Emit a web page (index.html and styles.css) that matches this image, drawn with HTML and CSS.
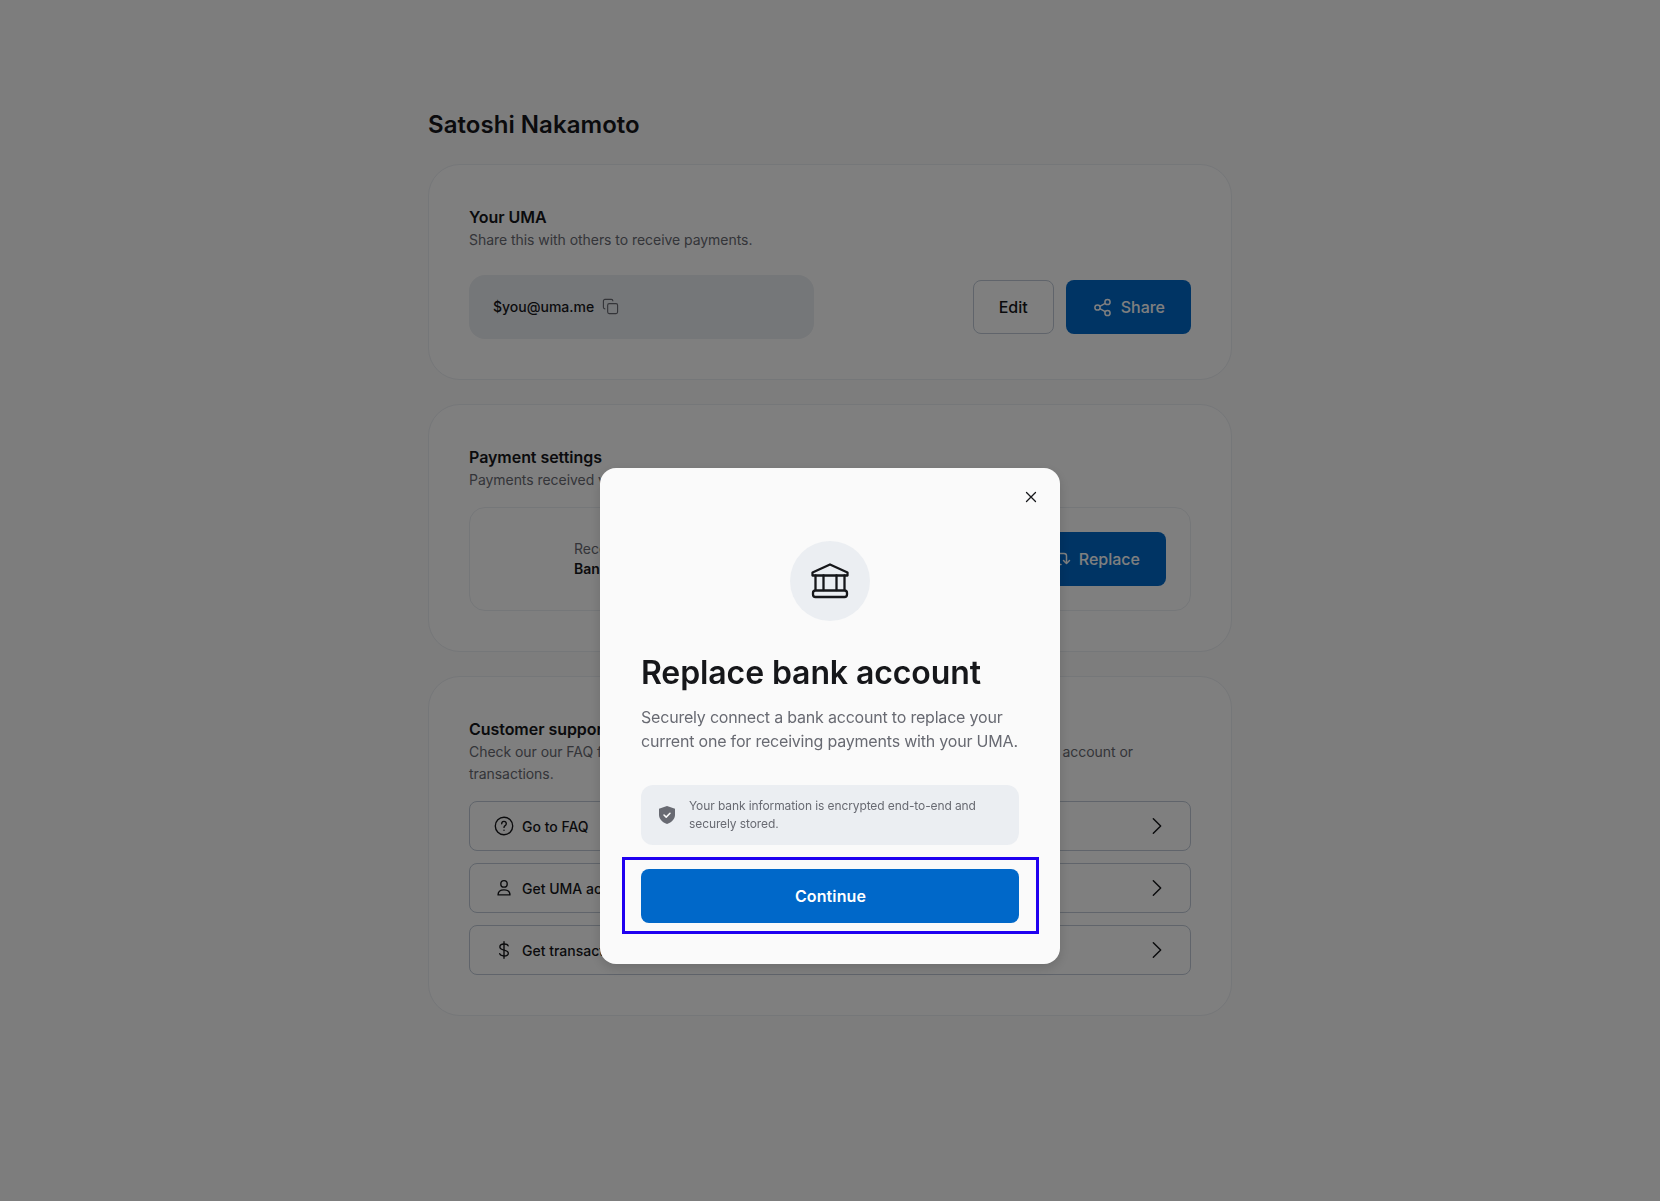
FILE: index.html
```html
<!DOCTYPE html>
<html>
  <head>
    <title>Settings</title>
    <link rel="stylesheet" href="styles.css">
  </head>
  <body>
    <main class="page">
      <h1 class="page-title">Satoshi Nakamoto</h1>

      <section class="card">
        <h2 class="card-title">Your UMA</h2>
        <p class="card-sub">Share this with others to receive payments.</p>
        <div class="uma-row">
          <div class="uma-pill">
            <span>$you@uma.me</span>
            <svg class="icon-copy" viewBox="0 0 18 18" fill="none" stroke="#686a72" stroke-width="1.2" stroke-linejoin="round">
              <path d="M3.5 11.5h-.4A1.6 1.6 0 0 1 1.5 9.900V3.100A1.600 1.600 0 0 1 3.100 1.500h6.800a1.600 1.600 0 0 1 1.600 1.600v.4"/>
              <rect x="6" y="6" width="10.500" height="10.500" rx="1.600"/>
            </svg>
          </div>
          <div class="uma-actions">
            <button class="btn btn-outline">Edit</button>
            <button class="btn btn-blue">
              <svg class="icon" viewBox="0 0 20 20" fill="none" stroke="currentColor" stroke-width="1.500">
                <circle cx="4.500" cy="10.500" r="2.600"/>
                <circle cx="14.500" cy="5" r="2.600"/>
                <circle cx="14.500" cy="16" r="2.600"/>
                <path d="M6.800 9.300l5.400-3M6.800 11.700l5.400 3"/>
              </svg>
              Share
            </button>
          </div>
        </div>
      </section>

      <section class="card">
        <h2 class="card-title">Payment settings</h2>
        <p class="card-sub">Payments received via your UMA are sent to this account.</p>
        <div class="account-box">
          <div class="account-text">
            <div class="account-label">Receiving payments to</div>
            <div class="account-name">Bank account</div>
          </div>
          <button class="btn btn-blue btn-replace">
            <svg class="icon" viewBox="0 0 20 20" fill="none" stroke="currentColor" stroke-width="1.500" stroke-linecap="round" stroke-linejoin="round">
              <path d="M3 12V7a2.500 2.500 0 0 1 2.500-2.500H13a2.500 2.500 0 0 1 2.500 2.500v7"/>
              <path d="M12.500 11.500l3 3 3-3"/>
              <path d="M3 15.500h7"/>
            </svg>
            Replace
          </button>
        </div>
      </section>

      <section class="card">
        <h2 class="card-title">Customer support</h2>
        <p class="card-sub card-sub-wrap">Check our our FAQ for answers to common questions, or contact us for help on your UMA account or transactions.</p>
        <div class="support-list">
          <a class="support-row">
            <svg class="icon-row" viewBox="0 0 24 24" fill="none" stroke="#16171a" stroke-width="1.500" stroke-linecap="round">
              <circle cx="12" cy="12" r="9.500"/>
              <path d="M9.500 9.500a2.500 2.500 0 1 1 3.800 2.100c-.8.500-1.300 1-1.300 1.900"/>
              <path d="M12 16.500v.1"/>
            </svg>
            <span>Go to FAQ</span>
            <svg class="chevron" viewBox="0 0 24 24" fill="none" stroke="#16171a" stroke-width="1.600" stroke-linecap="round" stroke-linejoin="round"><path d="M8 4l8 8-8 8"/></svg>
          </a>
          <a class="support-row">
            <svg class="icon-row" viewBox="0 0 24 24" fill="none" stroke="#16171a" stroke-width="1.500" stroke-linecap="round" stroke-linejoin="round">
              <circle cx="12" cy="7.500" r="3.500"/>
              <path d="M5.500 19.500c0-3.500 2.800-5.500 6.500-5.500s6.500 2 6.500 5.500z"/>
            </svg>
            <span>Get UMA account info</span>
            <svg class="chevron" viewBox="0 0 24 24" fill="none" stroke="#16171a" stroke-width="1.600" stroke-linecap="round" stroke-linejoin="round"><path d="M8 4l8 8-8 8"/></svg>
          </a>
          <a class="support-row">
            <svg class="icon-row" viewBox="0 0 24 24" fill="none" stroke="#16171a" stroke-width="1.500" stroke-linecap="round" stroke-linejoin="round">
              <path d="M12 3v18"/>
              <path d="M16.500 7.500C16 6 14.500 5.500 12 5.500c-2.800 0-4.500 1.200-4.500 3.200 0 4.600 9.200 2.200 9.200 6.800 0 2-1.900 3-4.700 3-2.500 0-4.200-.8-4.700-2.500"/>
            </svg>
            <span>Get transaction history</span>
            <svg class="chevron" viewBox="0 0 24 24" fill="none" stroke="#16171a" stroke-width="1.600" stroke-linecap="round" stroke-linejoin="round"><path d="M8 4l8 8-8 8"/></svg>
          </a>
        </div>
      </section>
    </main>

    <div class="overlay">
      <div class="modal">
        <button class="modal-close">
          <svg viewBox="0 0 12 12" fill="none" stroke="#16171a" stroke-width="1.300" stroke-linecap="round"><path d="M1.500 1.500l9 9M10.500 1.500l-9 9"/></svg>
        </button>
        <div class="modal-icon">
          <svg viewBox="0 0 38 36" fill="none" stroke="#16171a" stroke-width="2.300" stroke-linecap="round" stroke-linejoin="round">
            <path d="M19 1.500L36.500 9.500V12.500H1.500V9.500z"/>
            <path d="M4.500 12.500V27M12.500 12.500V27M25.500 12.500V27M33.500 12.500V27"/>
            <rect x="2" y="27.500" width="34" height="6.500" rx="2.500"/>
          </svg>
        </div>
        <h2 class="modal-title">Replace bank account</h2>
        <p class="modal-text">Securely connect a bank account to replace your current one for receiving payments with your UMA.</p>
        <div class="note">
          <svg class="note-icon" viewBox="0 0 20 20">
            <path fill="#686a72" d="M10 1l8 2.800v6c0 4.200-3.200 7.600-8 9.200-4.800-1.600-8-5-8-9.200v-6z"/>
            <path d="M7 10l2.200 2.100L13 8.300" fill="none" stroke="#fafafa" stroke-width="1.500" stroke-linecap="round" stroke-linejoin="round"/>
          </svg>
          <span>Your bank information is encrypted end-to-end and securely stored.</span>
        </div>
        <div class="modal-action">
          <button class="btn btn-blue btn-continue">Continue</button>
          <div class="highlight"></div>
        </div>
      </div>
    </div>
  </body>
</html>
```

FILE: styles.css
```css
* {
  box-sizing: border-box;
}
html,
body {
  margin: 0;
  height: 100%;
}
body {
  background: #fafafa;
  color: #16171a;
  font-family: Inter, "Liberation Sans", sans-serif;
  overflow: hidden;
}
h1,
h2,
p {
  margin: 0;
}
button {
  font-family: inherit;
  cursor: pointer;
}
.page {
  width: 804px;
  margin: 0 auto;
  padding-top: 109px;
}
.page-title {
  font-size: 24px;
  line-height: 32px;
  font-weight: 600;
  margin-bottom: 23px;
  letter-spacing: 0.05px;
}
.card {
  background: #fff;
  border: 1px solid #ebeef2;
  border-radius: 32px;
  padding: 40px;
  margin-bottom: 24px;
}
.card-title {
  font-size: 16px;
  line-height: 24px;
  font-weight: 600;
  letter-spacing: -0.05px;
}
.card-sub {
  font-size: 14px;
  line-height: 22px;
  color: #686a72;
  letter-spacing: -0.05px;
}
.card-sub-wrap {
  max-width: 680px;
}
.uma-row {
  display: flex;
  align-items: center;
  justify-content: space-between;
  margin-top: 24px;
}
.uma-pill {
  width: 345px;
  height: 64px;
  background: #ebeef2;
  border-radius: 16px;
  padding: 0 24px 2px;
  display: flex;
  align-items: center;
  gap: 8px;
  font-size: 14px;
  font-weight: 500;
}
.icon-copy {
  width: 17px;
  height: 17px;
}
.uma-actions {
  display: flex;
  gap: 12px;
}
.btn {
  height: 54px;
  border-radius: 8px;
  font-size: 16px;
  font-weight: 500;
  display: flex;
  align-items: center;
  justify-content: center;
  gap: 8px;
}
.btn-outline {
  width: 81px;
  background: transparent;
  color: #16171a;
  border: 1px solid #c0c9d6;
}
.btn-blue {
  background: #0068c9;
  color: #fff;
  border: none;
  padding: 0 26px 0 27px;
}
.icon {
  width: 20px;
  height: 20px;
}
.account-box {
  display: flex;
  align-items: center;
  justify-content: space-between;
  margin-top: 16px;
  padding: 24px;
  height: 104px;
  border: 1px solid #ebeef2;
  border-radius: 16px;
}
.account-text {
  padding-left: 80px;
  font-size: 14px;
  line-height: 20px;
}
.account-label {
  color: #686a72;
}
.account-name {
  font-weight: 600;
}
.support-list {
  display: flex;
  flex-direction: column;
  gap: 12px;
  margin-top: 16px;
}
.support-row {
  height: 50px;
  border: 1px solid #c0c9d6;
  border-radius: 8px;
  padding: 0 24px 0 23px;
  display: flex;
  align-items: center;
  gap: 7px;
  font-size: 14px;
  font-weight: 500;
}
.icon-row {
  width: 22px;
  height: 22px;
}
.chevron {
  width: 22px;
  height: 22px;
  margin-left: auto;
  margin-right: -2px;
}
.overlay {
  position: fixed;
  inset: 0;
  background: rgba(0, 0, 0, 0.5);
  display: flex;
  justify-content: center;
  align-items: flex-start;
  padding-top: 468px;
}
.modal {
  position: relative;
  width: 460px;
  height: 496px;
  background: #fafafa;
  border-radius: 16px;
  padding: 73px 41px 40px;
  box-shadow: 0 4px 12px rgba(0, 0, 0, 0.15);
}
.modal-close {
  position: absolute;
  top: 23px;
  right: 23px;
  width: 12px;
  height: 12px;
  padding: 0;
  border: none;
  background: none;
  display: flex;
}
.modal-icon {
  width: 80px;
  height: 80px;
  margin: 0 auto;
  border-radius: 50%;
  background: #ebeef2;
  display: flex;
  align-items: center;
  justify-content: center;
}
.modal-icon svg {
  width: 38px;
  height: 36px;
}
.modal-title {
  font-size: 32px;
  line-height: 40px;
  font-weight: 600;
  margin-top: 32px;
  letter-spacing: -0.1px;
}
.modal-text {
  font-size: 16px;
  line-height: 24px;
  color: #686a72;
  margin-top: 12px;
  letter-spacing: -0.2px;
}
.note {
  display: flex;
  align-items: center;
  gap: 12px;
  height: 60px;
  margin-top: 32px;
  padding: 0 16px;
  background: #ebeef2;
  border-radius: 12px;
  font-size: 12px;
  line-height: 18px;
  color: #686a72;
  letter-spacing: -0.1px;
}
.note-icon {
  width: 20px;
  height: 20px;
  flex-shrink: 0;
}
.modal-action {
  position: relative;
  margin-top: 24px;
}
.btn-continue {
  width: 100%;
  font-weight: 600;
  letter-spacing: 0.1px;
}
.highlight {
  position: absolute;
  top: -12px;
  bottom: -11px;
  left: -19px;
  right: -20px;
  border: 3px solid #2000f0;
}
```
